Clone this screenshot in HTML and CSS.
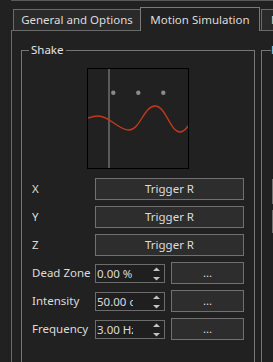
FILE: index.html
```html
<!DOCTYPE html>
<html>
<head>
<meta charset="utf-8">
<link rel="stylesheet" href="styles.css">
</head>
<body>
<div class="window">
  <div class="frame-top"></div>
  <div class="tabbar">
    <div class="tab tab-general">General and Options</div>
    <div class="tab tab-active">Motion Simulation</div>
    <div class="tab tab-next">Mouse</div>
  </div>
  <div class="panel">
    <fieldset class="group group-shake">
      <legend class="group-title">Shake</legend>
      <div class="graph">
        <svg width="100" height="99" viewBox="0 0 100 99">
          <rect x="20" y="0" width="2" height="99" fill="#5a5a5a"/>
          <circle cx="25.3" cy="23.7" r="2.2" fill="#8a8a8a"/>
          <circle cx="50.3" cy="23.7" r="2.2" fill="#8a8a8a"/>
          <circle cx="75.3" cy="23.7" r="2.2" fill="#8a8a8a"/>
          <path d="M0,49 C3,48 7,47 10,47 C22,47 30,61 41,61 C52,61 56,37 67,37 C78,37 82,63 92,63 C96,63 98,60 100,57" fill="none" stroke="#c23a1a" stroke-width="1.4"/>
        </svg>
      </div>
      <div class="form">
        <div class="label">X</div>
        <div class="button wide">Trigger R</div>
        <div class="label">Y</div>
        <div class="button wide">Trigger R</div>
        <div class="label">Z</div>
        <div class="button wide">Trigger R</div>

        <div class="label">Dead Zone</div>
        <div class="spin">
          <span class="spin-text">0.00 %</span>
          <span class="spin-arrows"><svg width="9" height="17" viewBox="0 0 9 17"><polygon points="1,6 4.5,2.5 8,6" fill="#c4c4c4"/><polygon points="1,12 8,12 4.5,15.5" fill="#c4c4c4"/></svg></span>
        </div>
        <div class="button">...</div>

        <div class="label">Intensity</div>
        <div class="spin">
          <span class="spin-text">50.00 c</span>
          <span class="spin-arrows"><svg width="9" height="17" viewBox="0 0 9 17"><polygon points="1,6 4.5,2.5 8,6" fill="#c4c4c4"/><polygon points="1,12 8,12 4.5,15.5" fill="#c4c4c4"/></svg></span>
        </div>
        <div class="button">...</div>

        <div class="label">Frequency</div>
        <div class="spin">
          <span class="spin-text">3.00 Hz</span>
          <span class="spin-arrows"><svg width="9" height="17" viewBox="0 0 9 17"><polygon points="1,6 4.5,2.5 8,6" fill="#c4c4c4"/><polygon points="1,12 8,12 4.5,15.5" fill="#c4c4c4"/></svg></span>
        </div>
        <div class="button">...</div>
      </div>
    </fieldset>
    <fieldset class="group group-next">
      <legend class="group-title next-title">Rumble</legend>
      <div class="next-col">
        <div class="next-btn tall">Trigger L</div>
        <div class="next-btn">Trigger L</div>
        <div class="next-label">Dead Zone</div>
        <div class="next-label">Intensity</div>
        <div class="next-label">Frequency</div>
        <div class="next-label">Duration</div>
      </div>
    </fieldset>
  </div>
</div>
</body>
</html>
```
FILE: styles.css
```css
html, body {
  margin: 0;
  padding: 0;
  background: #212121;
  overflow: hidden;
}
body {
  font-family: "Noto Sans", "Open Sans", sans-serif;
  font-size: 11.5px;
  color: #dcdcdc;
}
.window {
  width: 420px;
}
.frame-top {
  margin-left: 11px;
  height: 1px;
  background: #5a5a5a;
}
.tabbar {
  display: flex;
  align-items: flex-end;
  height: 29px;
  padding-left: 13px;
}
.tab {
  box-sizing: border-box;
  height: 21px;
  line-height: 20px;
  text-align: center;
  border: 1px solid #6a6a6a;
  border-bottom: none;
  background: #2a2a2a;
  white-space: nowrap;
  overflow: hidden;
}
.tab-general {
  width: 128px;
}
.tab-active {
  width: 120px;
  height: 24px;
  line-height: 23px;
  margin-bottom: -1px;
  margin-left: -1px;
  background: #212121;
  position: relative;
  z-index: 1;
  border-color: #7a7a7a;
}
.tab-next {
  width: 90px;
  padding-left: 9px;
  text-align: left;
  margin-left: 1px;
}
.panel {
  margin-left: 11px;
  border: 1px solid #6a6a6a;
  border-bottom: none;
  padding: 11px 0 0 9px;
  height: 400px;
  display: flex;
  gap: 6px;
  align-items: flex-start;
}
.group {
  margin: 0;
  padding: 0 10px 30px 10px;
  border: 1px solid #767676;
  min-width: 0;
  box-sizing: border-box;
}
.group-shake {
  width: 234px;
}
.group-next {
  width: 140px;
}
.group-title {
  padding: 0 2px;
  margin-left: -3px;
  line-height: 16px;
  color: #e4e4e4;
}
.next-title {
  margin-left: -1px;
  padding: 0;
  color: #9fd7ee;
}
.graph {
  width: 100px;
  height: 99px;
  border: 1px solid #000;
  margin: 10px auto 0;
}
.graph svg {
  display: block;
}
.form {
  display: grid;
  grid-template-columns: 57px 70px 73px;
  grid-auto-rows: 22px;
  column-gap: 6px;
  row-gap: 6px;
  margin-top: 9px;
}
.label {
  align-self: center;
  white-space: nowrap;
  line-height: 16px;
}
.button {
  box-sizing: border-box;
  border: 1px solid #707070;
  background: #2d2d2d;
  text-align: center;
  line-height: 20px;
  white-space: nowrap;
}
.wide {
  grid-column: 2 / 4;
}
.spin {
  box-sizing: border-box;
  align-self: center;
  height: 19px;
  border: 1px solid #6c6c6c;
  background: #1f1f1f;
  display: flex;
  align-items: center;
}
.spin-text {
  width: 36px;
  padding-left: 1px;
  overflow: hidden;
  white-space: nowrap;
  line-height: 17px;
}
.spin-arrows {
  margin-left: auto;
  margin-right: 3px;
  display: flex;
}
.spin-arrows svg {
  display: block;
}
.next-col {
  display: flex;
  flex-direction: column;
  margin-top: 121px;
}
.next-btn {
  box-sizing: border-box;
  height: 23px;
  border: 1px solid #707070;
  background: #3a3a3a;
  padding-left: 10px;
  line-height: 21px;
  white-space: nowrap;
}
.next-btn.tall {
  height: 25px;
  margin-bottom: 6px;
}
.next-label {
  margin-top: 12px;
  padding-left: 1px;
  line-height: 16px;
  white-space: nowrap;
}
```
